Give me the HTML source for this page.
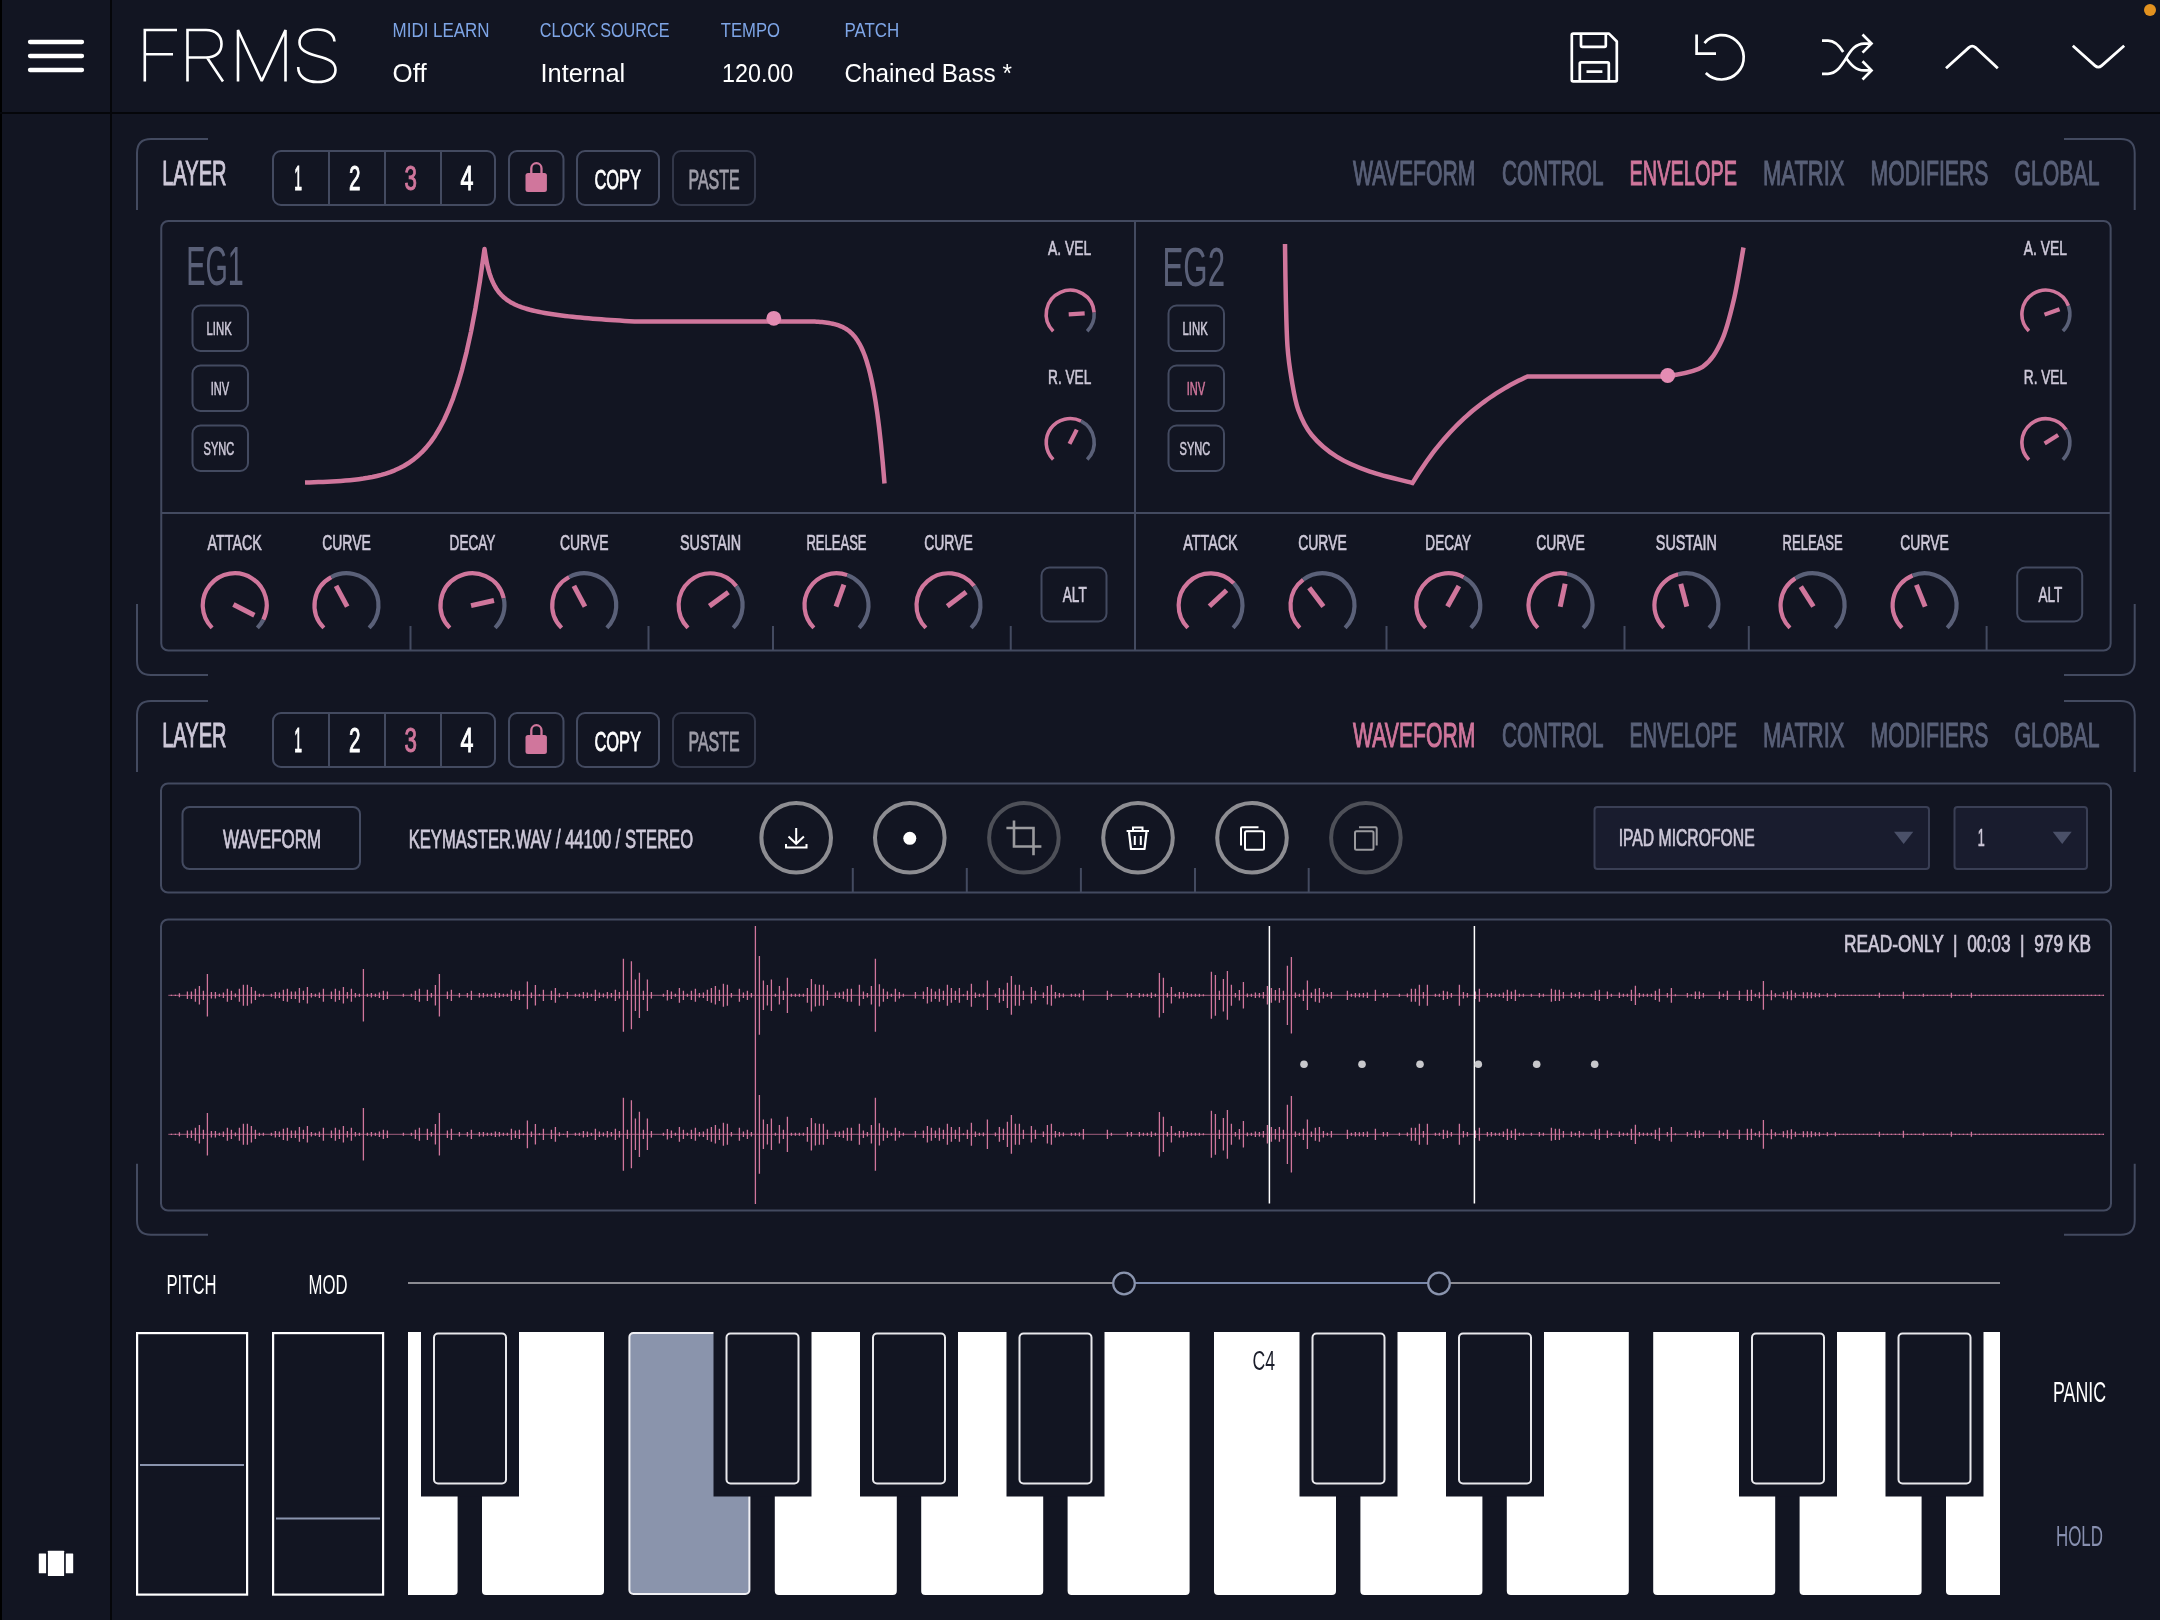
<!DOCTYPE html><html><head><meta charset="utf-8"><title>FRMS</title><style>html,body{margin:0;padding:0;background:#121522;width:2160px;height:1620px;overflow:hidden}svg{display:block;will-change:transform}text{font-family:"Liberation Sans",sans-serif}</style></head><body>
<svg width="2160" height="1620" viewBox="0 0 2160 1620">
<rect width="2160" height="1620" fill="#121522"/>
<rect x="0" y="0" width="2" height="1620" fill="#000"/>
<rect x="110" y="0" width="2" height="1620" fill="#05060a"/>
<rect x="0" y="112" width="2160" height="2" fill="#05060a"/>
<line x1="30" y1="42" x2="82" y2="42" stroke="#ffffff" stroke-width="4.3" stroke-linecap="round"/>
<line x1="30" y1="56" x2="82" y2="56" stroke="#ffffff" stroke-width="4.3" stroke-linecap="round"/>
<line x1="30" y1="70" x2="82" y2="70" stroke="#ffffff" stroke-width="4.3" stroke-linecap="round"/>
<path d="M144.8 81.5 V30 H177 M144.8 54.3 H173" fill="none" stroke="#ffffff" stroke-width="2.6"/>
<path d="M187.5 81.5 V30 H206 C216 30 221.5 36 221.5 44 C221.5 52 216 57.5 206 57.5 H187.5 M207 57.5 L223 81.5" fill="none" stroke="#ffffff" stroke-width="2.6"/>
<path d="M238 81.5 V30 L261.7 81 L285.5 30 V81.5" fill="none" stroke="#ffffff" stroke-width="2.6" stroke-linejoin="bevel"/>
<path d="M334.5 41.5 C334 33 326 29.5 317.5 29.5 C306 29.5 299.5 35 299.5 42.5 C299.5 50 306 53 317 56 C329 59 335.5 62 335.5 70 C335.5 77.5 328.5 82 317.5 82 C305.5 82 298.2 76 298.2 67" fill="none" stroke="#ffffff" stroke-width="2.6"/>
<text x="392.6" y="37.4" font-size="19.33" fill="#7ea5e6" text-anchor="start" font-weight="normal" textLength="97" lengthAdjust="spacingAndGlyphs">MIDI LEARN</text>
<text x="539.7" y="37.4" font-size="19.33" fill="#7ea5e6" text-anchor="start" font-weight="normal" textLength="129.9" lengthAdjust="spacingAndGlyphs">CLOCK SOURCE</text>
<text x="720.7" y="37.4" font-size="19.33" fill="#7ea5e6" text-anchor="start" font-weight="normal" textLength="59.3" lengthAdjust="spacingAndGlyphs">TEMPO</text>
<text x="844.4" y="37.4" font-size="19.33" fill="#7ea5e6" text-anchor="start" font-weight="normal" textLength="54.9" lengthAdjust="spacingAndGlyphs">PATCH</text>
<text x="392.6" y="81.9" font-size="26.6" fill="#ffffff" text-anchor="start" font-weight="normal" textLength="34.1" lengthAdjust="spacingAndGlyphs">Off</text>
<text x="540.5" y="81.9" font-size="26.6" fill="#ffffff" text-anchor="start" font-weight="normal" textLength="84.7" lengthAdjust="spacingAndGlyphs">Internal</text>
<text x="722" y="81.9" font-size="26.6" fill="#ffffff" text-anchor="start" font-weight="normal" textLength="71.3" lengthAdjust="spacingAndGlyphs">120.00</text>
<text x="844.4" y="81.9" font-size="26.6" fill="#ffffff" text-anchor="start" font-weight="normal" textLength="167.5" lengthAdjust="spacingAndGlyphs">Chained Bass *</text>
<path d="M1571.8 35 Q1571.8 33.6 1573.2 33.6 H1609 L1616.8 41.5 V80 Q1616.8 81.4 1615.4 81.4 H1573.2 Q1571.8 81.4 1571.8 80 Z" fill="none" stroke="#ffffff" stroke-width="2.7" stroke-linejoin="round"/>
<path d="M1581 33.6 V45.5 Q1581 46.8 1582.3 46.8 H1604.5 Q1605.8 46.8 1605.8 45.5 V33.6" fill="none" stroke="#ffffff" stroke-width="2.7"/>
<path d="M1579.8 81.4 V63.5 Q1579.8 62.3 1581 62.3 H1607.6 Q1608.8 62.3 1608.8 63.5 V81.4" fill="none" stroke="#ffffff" stroke-width="2.7"/>
<line x1="1586.5" y1="71.6" x2="1602.4" y2="71.6" stroke="#ffffff" stroke-width="2.7"/>
<path d="M1705.8 73 A22.2 22.2 0 1 0 1704.49 43.03" fill="none" stroke="#ffffff" stroke-width="2.7"/>
<path d="M1696.6 34.5 V53.6 H1716" fill="none" stroke="#ffffff" stroke-width="2.7"/>
<path d="M1822 40.6 H1828 C1834 40.6 1839 45 1843.2 52" fill="none" stroke="#ffffff" stroke-width="2.7"/>
<path d="M1822 73.8 H1828 C1836 73.8 1840.5 67 1846 58.5 C1851 50 1856 43.6 1864 43.6 H1871" fill="none" stroke="#ffffff" stroke-width="2.7"/>
<path d="M1845.6 57.2 C1851 65 1856 70.4 1864 70.4 H1871" fill="none" stroke="#ffffff" stroke-width="2.7"/>
<path d="M1862.5 34.5 L1871.5 43.6 L1862.5 52.6" fill="none" stroke="#ffffff" stroke-width="2.7"/>
<path d="M1862.5 61.3 L1871.5 70.4 L1862.5 79.5" fill="none" stroke="#ffffff" stroke-width="2.7"/>
<path d="M1946 68.3 L1968.8 47.6 Q1972.2 44.6 1975.6 47.6 L1997.8 68.3" fill="none" stroke="#ffffff" stroke-width="2.8"/>
<path d="M2072.8 45.8 L2094.9 65.6 Q2098.3 68.6 2101.7 65.6 L2124.2 45.8" fill="none" stroke="#ffffff" stroke-width="2.8"/>
<circle cx="2150" cy="10" r="6" fill="#e3921f" stroke="none" stroke-width="2"/>
<path d="M137 210 V153 Q137 139 151 139 H208" fill="none" stroke="#434a60" stroke-width="2"/>
<path d="M2064 139 H2120.7 Q2134.7 139 2134.7 153 V210" fill="none" stroke="#434a60" stroke-width="2"/>
<path d="M137 604 V661 Q137 675 151 675 H208" fill="none" stroke="#434a60" stroke-width="2"/>
<path d="M2064 675 H2120.7 Q2134.7 675 2134.7 661 V604" fill="none" stroke="#434a60" stroke-width="2"/>
<text x="162.22" y="185.38" font-size="34.4" fill="#cdc8d8" text-anchor="start" font-weight="normal" textLength="64.27" lengthAdjust="spacingAndGlyphs" stroke="#cdc8d8" stroke-width="1.03">LAYER</text>
<rect x="273" y="151" width="222" height="54" rx="8" fill="none" stroke="#434a60" stroke-width="2"/>
<line x1="329" y1="152" x2="329" y2="204" stroke="#434a60" stroke-width="2"/>
<line x1="385" y1="152" x2="385" y2="204" stroke="#434a60" stroke-width="2"/>
<line x1="441" y1="152" x2="441" y2="204" stroke="#434a60" stroke-width="2"/>
<text x="294.13" y="189.87" font-size="35.38" fill="#ffffff" text-anchor="start" font-weight="normal" textLength="7.74" lengthAdjust="spacingAndGlyphs" stroke="#ffffff" stroke-width="1.06">1</text>
<text x="349.03" y="189.87" font-size="35.38" fill="#ffffff" text-anchor="start" font-weight="normal" textLength="11.44" lengthAdjust="spacingAndGlyphs" stroke="#ffffff" stroke-width="1.06">2</text>
<text x="404.53" y="189.87" font-size="35.38" fill="#d0769c" text-anchor="start" font-weight="normal" textLength="12.44" lengthAdjust="spacingAndGlyphs" stroke="#d0769c" stroke-width="1.06">3</text>
<text x="460.53" y="189.87" font-size="35.38" fill="#ffffff" text-anchor="start" font-weight="normal" textLength="12.94" lengthAdjust="spacingAndGlyphs" stroke="#ffffff" stroke-width="1.06">4</text>
<rect x="509" y="151" width="54.5" height="54" rx="8" fill="none" stroke="#434a60" stroke-width="2"/>
<path d="M531.3 175 V168.3 A5.1 5.1 0 0 1 541.5 168.3 V175" fill="none" stroke="#d0769c" stroke-width="2.3"/>
<rect x="525.5" y="173" width="21.4" height="19" rx="2.5" fill="#d0769c" stroke="none" stroke-width="0"/>
<rect x="577" y="151" width="82" height="54" rx="8" fill="none" stroke="#434a60" stroke-width="2"/>
<text x="594.43" y="188.57" font-size="28.55" fill="#ffffff" text-anchor="start" font-weight="normal" textLength="46.64" lengthAdjust="spacingAndGlyphs" stroke="#ffffff" stroke-width="0.86">COPY</text>
<rect x="673" y="151" width="82" height="54" rx="8" fill="none" stroke="#323749" stroke-width="2"/>
<text x="688.43" y="188.57" font-size="28.55" fill="#9e9da8" text-anchor="start" font-weight="normal" textLength="51.14" lengthAdjust="spacingAndGlyphs" stroke="#9e9da8" stroke-width="0.86">PASTE</text>
<text x="1353.02" y="185.48" font-size="34.82" fill="#596078" text-anchor="start" font-weight="normal" textLength="122.46" lengthAdjust="spacingAndGlyphs" stroke="#596078" stroke-width="1.04">WAVEFORM</text>
<text x="1502.02" y="185.48" font-size="34.82" fill="#596078" text-anchor="start" font-weight="normal" textLength="101.46" lengthAdjust="spacingAndGlyphs" stroke="#596078" stroke-width="1.04">CONTROL</text>
<text x="1629.52" y="185.48" font-size="34.82" fill="#d0769c" text-anchor="start" font-weight="normal" textLength="107.46" lengthAdjust="spacingAndGlyphs" stroke="#d0769c" stroke-width="1.04">ENVELOPE</text>
<text x="1763.02" y="185.48" font-size="34.82" fill="#596078" text-anchor="start" font-weight="normal" textLength="81.46" lengthAdjust="spacingAndGlyphs" stroke="#596078" stroke-width="1.04">MATRIX</text>
<text x="1870.52" y="185.48" font-size="34.82" fill="#596078" text-anchor="start" font-weight="normal" textLength="117.96" lengthAdjust="spacingAndGlyphs" stroke="#596078" stroke-width="1.04">MODIFIERS</text>
<text x="2014.52" y="185.48" font-size="34.82" fill="#596078" text-anchor="start" font-weight="normal" textLength="84.96" lengthAdjust="spacingAndGlyphs" stroke="#596078" stroke-width="1.04">GLOBAL</text>
<rect x="161.25" y="221" width="1949.4" height="429.5" rx="7" fill="none" stroke="#434a60" stroke-width="2"/>
<line x1="162" y1="513" x2="2110" y2="513" stroke="#434a60" stroke-width="2"/>
<line x1="1135" y1="222" x2="1135" y2="650" stroke="#434a60" stroke-width="2"/>
<text x="186.25" y="284.5" font-size="56.32" fill="#5a6078" text-anchor="start" font-weight="normal" textLength="57.5" lengthAdjust="spacingAndGlyphs">EG1</text>
<rect x="192.5" y="305.5" width="55.5" height="45.5" rx="8" fill="none" stroke="#434a60" stroke-width="2"/>
<text x="206.52" y="335.23" font-size="18.11" fill="#cdc8d8" text-anchor="start" font-weight="normal" textLength="25.21" lengthAdjust="spacingAndGlyphs" stroke="#cdc8d8" stroke-width="0.54">LINK</text>
<rect x="192.5" y="365.5" width="55.5" height="45.5" rx="8" fill="none" stroke="#434a60" stroke-width="2"/>
<text x="210.77" y="395.23" font-size="18.11" fill="#cdc8d8" text-anchor="start" font-weight="normal" textLength="18.46" lengthAdjust="spacingAndGlyphs" stroke="#cdc8d8" stroke-width="0.54">INV</text>
<rect x="192.5" y="425.5" width="55.5" height="45.5" rx="8" fill="none" stroke="#434a60" stroke-width="2"/>
<text x="203.52" y="455.23" font-size="18.11" fill="#cdc8d8" text-anchor="start" font-weight="normal" textLength="30.71" lengthAdjust="spacingAndGlyphs" stroke="#cdc8d8" stroke-width="0.54">SYNC</text>
<rect x="1041.5" y="567.5" width="65" height="54" rx="8" fill="none" stroke="#434a60" stroke-width="2"/>
<text x="1062.83" y="601.67" font-size="21.94" fill="#cdc8d8" text-anchor="start" font-weight="normal" textLength="23.84" lengthAdjust="spacingAndGlyphs" stroke="#cdc8d8" stroke-width="0.66">ALT</text>
<text x="1048.11" y="255.29" font-size="20.33" fill="#cdc8d8" text-anchor="start" font-weight="normal" textLength="43.19" lengthAdjust="spacingAndGlyphs" stroke="#cdc8d8" stroke-width="0.61">A. VEL</text>
<text x="1048.11" y="383.69" font-size="20.33" fill="#cdc8d8" text-anchor="start" font-weight="normal" textLength="43.19" lengthAdjust="spacingAndGlyphs" stroke="#cdc8d8" stroke-width="0.61">R. VEL</text>
<line x1="410.5" y1="626" x2="410.5" y2="650" stroke="#434a60" stroke-width="2"/>
<line x1="648.5" y1="626" x2="648.5" y2="650" stroke="#434a60" stroke-width="2"/>
<line x1="773" y1="626" x2="773" y2="650" stroke="#434a60" stroke-width="2"/>
<line x1="1010.75" y1="626" x2="1010.75" y2="650" stroke="#434a60" stroke-width="2"/>
<text x="1162.5" y="285.5" font-size="56.32" fill="#5a6078" text-anchor="start" font-weight="normal" textLength="62.5" lengthAdjust="spacingAndGlyphs">EG2</text>
<rect x="1168.5" y="305.5" width="55.5" height="45.5" rx="8" fill="none" stroke="#434a60" stroke-width="2"/>
<text x="1182.52" y="335.23" font-size="18.11" fill="#cdc8d8" text-anchor="start" font-weight="normal" textLength="25.21" lengthAdjust="spacingAndGlyphs" stroke="#cdc8d8" stroke-width="0.54">LINK</text>
<rect x="1168.5" y="365.5" width="55.5" height="45.5" rx="8" fill="none" stroke="#434a60" stroke-width="2"/>
<text x="1186.77" y="395.23" font-size="18.11" fill="#d0769c" text-anchor="start" font-weight="normal" textLength="18.46" lengthAdjust="spacingAndGlyphs" stroke="#d0769c" stroke-width="0.54">INV</text>
<rect x="1168.5" y="425.5" width="55.5" height="45.5" rx="8" fill="none" stroke="#434a60" stroke-width="2"/>
<text x="1179.52" y="455.23" font-size="18.11" fill="#cdc8d8" text-anchor="start" font-weight="normal" textLength="30.71" lengthAdjust="spacingAndGlyphs" stroke="#cdc8d8" stroke-width="0.54">SYNC</text>
<rect x="2017.2" y="567.5" width="65" height="54" rx="8" fill="none" stroke="#434a60" stroke-width="2"/>
<text x="2038.53" y="601.67" font-size="21.94" fill="#cdc8d8" text-anchor="start" font-weight="normal" textLength="23.84" lengthAdjust="spacingAndGlyphs" stroke="#cdc8d8" stroke-width="0.66">ALT</text>
<text x="2023.81" y="255.29" font-size="20.33" fill="#cdc8d8" text-anchor="start" font-weight="normal" textLength="43.19" lengthAdjust="spacingAndGlyphs" stroke="#cdc8d8" stroke-width="0.61">A. VEL</text>
<text x="2023.81" y="383.69" font-size="20.33" fill="#cdc8d8" text-anchor="start" font-weight="normal" textLength="43.19" lengthAdjust="spacingAndGlyphs" stroke="#cdc8d8" stroke-width="0.61">R. VEL</text>
<line x1="1386.5" y1="626" x2="1386.5" y2="650" stroke="#434a60" stroke-width="2"/>
<line x1="1624.5" y1="626" x2="1624.5" y2="650" stroke="#434a60" stroke-width="2"/>
<line x1="1748.8" y1="626" x2="1748.8" y2="650" stroke="#434a60" stroke-width="2"/>
<line x1="1986.6" y1="626" x2="1986.6" y2="650" stroke="#434a60" stroke-width="2"/>
<text x="207.59" y="549.66" font-size="22.63" fill="#cdc8d8" text-anchor="start" font-weight="normal" textLength="54.32" lengthAdjust="spacingAndGlyphs" stroke="#cdc8d8" stroke-width="0.68">ATTACK</text>
<path d="M212.12 627.88 A32 32 0 1 1 263.28 619.73" fill="none" stroke="#d0769c" stroke-width="4.2"/>
<path d="M263.28 619.73 A32 32 0 0 1 257.38 627.88" fill="none" stroke="#5a6078" stroke-width="4.2"/>
<line x1="233.41" y1="604.57" x2="254.37" y2="615.21" stroke="#d0769c" stroke-width="5"/>
<text x="322.21" y="549.66" font-size="22.63" fill="#cdc8d8" text-anchor="start" font-weight="normal" textLength="48.57" lengthAdjust="spacingAndGlyphs" stroke="#cdc8d8" stroke-width="0.68">CURVE</text>
<path d="M323.87 627.88 A32 32 0 0 1 331.3 577.09" fill="none" stroke="#d0769c" stroke-width="4.2"/>
<path d="M331.3 577.09 A32 32 0 0 1 369.13 627.88" fill="none" stroke="#5a6078" stroke-width="4.2"/>
<line x1="347.21" y1="606.57" x2="336.05" y2="585.89" stroke="#d0769c" stroke-width="5"/>
<text x="449.59" y="549.66" font-size="22.63" fill="#cdc8d8" text-anchor="start" font-weight="normal" textLength="45.82" lengthAdjust="spacingAndGlyphs" stroke="#cdc8d8" stroke-width="0.68">DECAY</text>
<path d="M449.87 627.88 A32 32 0 1 1 503.74 598.32" fill="none" stroke="#d0769c" stroke-width="4.2"/>
<path d="M503.74 598.32 A32 32 0 0 1 495.13 627.88" fill="none" stroke="#5a6078" stroke-width="4.2"/>
<line x1="471.04" y1="605.57" x2="493.98" y2="600.48" stroke="#d0769c" stroke-width="5"/>
<text x="559.96" y="549.66" font-size="22.63" fill="#cdc8d8" text-anchor="start" font-weight="normal" textLength="48.57" lengthAdjust="spacingAndGlyphs" stroke="#cdc8d8" stroke-width="0.68">CURVE</text>
<path d="M561.62 627.88 A32 32 0 0 1 569.19 577.02" fill="none" stroke="#d0769c" stroke-width="4.2"/>
<path d="M569.19 577.02 A32 32 0 0 1 606.88 627.88" fill="none" stroke="#5a6078" stroke-width="4.2"/>
<line x1="584.96" y1="606.57" x2="573.89" y2="585.84" stroke="#d0769c" stroke-width="5"/>
<text x="680.06" y="549.66" font-size="22.63" fill="#cdc8d8" text-anchor="start" font-weight="normal" textLength="61.07" lengthAdjust="spacingAndGlyphs" stroke="#cdc8d8" stroke-width="0.68">SUSTAIN</text>
<path d="M687.97 627.88 A32 32 0 1 1 736.4 586.32" fill="none" stroke="#d0769c" stroke-width="4.2"/>
<path d="M736.4 586.32 A32 32 0 0 1 733.23 627.88" fill="none" stroke="#5a6078" stroke-width="4.2"/>
<line x1="709.39" y1="606.14" x2="728.34" y2="592.23" stroke="#d0769c" stroke-width="5"/>
<text x="806.46" y="549.66" font-size="22.63" fill="#cdc8d8" text-anchor="start" font-weight="normal" textLength="60.07" lengthAdjust="spacingAndGlyphs" stroke="#cdc8d8" stroke-width="0.68">RELEASE</text>
<path d="M813.87 627.88 A32 32 0 0 1 847.29 575.12" fill="none" stroke="#d0769c" stroke-width="4.2"/>
<path d="M847.29 575.12 A32 32 0 0 1 859.13 627.88" fill="none" stroke="#5a6078" stroke-width="4.2"/>
<line x1="835.99" y1="606.66" x2="843.92" y2="584.54" stroke="#d0769c" stroke-width="5"/>
<text x="924.21" y="549.66" font-size="22.63" fill="#cdc8d8" text-anchor="start" font-weight="normal" textLength="48.57" lengthAdjust="spacingAndGlyphs" stroke="#cdc8d8" stroke-width="0.68">CURVE</text>
<path d="M925.87 627.88 A32 32 0 1 1 974.12 586.08" fill="none" stroke="#d0769c" stroke-width="4.2"/>
<path d="M974.12 586.08 A32 32 0 0 1 971.13 627.88" fill="none" stroke="#5a6078" stroke-width="4.2"/>
<line x1="947.3" y1="606.15" x2="966.11" y2="592.07" stroke="#d0769c" stroke-width="5"/>
<text x="1183.34" y="549.66" font-size="22.63" fill="#cdc8d8" text-anchor="start" font-weight="normal" textLength="54.32" lengthAdjust="spacingAndGlyphs" stroke="#cdc8d8" stroke-width="0.68">ATTACK</text>
<path d="M1187.87 627.88 A32 32 0 1 1 1233.9 583.42" fill="none" stroke="#d0769c" stroke-width="4.2"/>
<path d="M1233.9 583.42 A32 32 0 0 1 1233.13 627.88" fill="none" stroke="#5a6078" stroke-width="4.2"/>
<line x1="1209.4" y1="606.27" x2="1226.58" y2="590.24" stroke="#d0769c" stroke-width="5"/>
<text x="1298.21" y="549.66" font-size="22.63" fill="#cdc8d8" text-anchor="start" font-weight="normal" textLength="48.57" lengthAdjust="spacingAndGlyphs" stroke="#cdc8d8" stroke-width="0.68">CURVE</text>
<path d="M1299.87 627.88 A32 32 0 0 1 1303.25 579.69" fill="none" stroke="#d0769c" stroke-width="4.2"/>
<path d="M1303.25 579.69 A32 32 0 0 1 1345.13 627.88" fill="none" stroke="#5a6078" stroke-width="4.2"/>
<line x1="1323.4" y1="606.45" x2="1309.26" y2="587.68" stroke="#d0769c" stroke-width="5"/>
<text x="1425.34" y="549.66" font-size="22.63" fill="#cdc8d8" text-anchor="start" font-weight="normal" textLength="45.82" lengthAdjust="spacingAndGlyphs" stroke="#cdc8d8" stroke-width="0.68">DECAY</text>
<path d="M1425.62 627.88 A32 32 0 0 1 1463.71 577.23" fill="none" stroke="#d0769c" stroke-width="4.2"/>
<path d="M1463.71 577.23 A32 32 0 0 1 1470.88 627.88" fill="none" stroke="#5a6078" stroke-width="4.2"/>
<line x1="1447.53" y1="606.56" x2="1458.88" y2="585.99" stroke="#d0769c" stroke-width="5"/>
<text x="1536.21" y="549.66" font-size="22.63" fill="#cdc8d8" text-anchor="start" font-weight="normal" textLength="48.57" lengthAdjust="spacingAndGlyphs" stroke="#cdc8d8" stroke-width="0.68">CURVE</text>
<path d="M1537.87 627.88 A32 32 0 0 1 1567.24 573.97" fill="none" stroke="#d0769c" stroke-width="4.2"/>
<path d="M1567.24 573.97 A32 32 0 0 1 1583.13 627.88" fill="none" stroke="#5a6078" stroke-width="4.2"/>
<line x1="1560.18" y1="606.72" x2="1565.13" y2="583.74" stroke="#d0769c" stroke-width="5"/>
<text x="1655.86" y="549.66" font-size="22.63" fill="#cdc8d8" text-anchor="start" font-weight="normal" textLength="61.07" lengthAdjust="spacingAndGlyphs" stroke="#cdc8d8" stroke-width="0.68">SUSTAIN</text>
<path d="M1663.77 627.88 A32 32 0 0 1 1678.2 574.32" fill="none" stroke="#d0769c" stroke-width="4.2"/>
<path d="M1678.2 574.32 A32 32 0 0 1 1709.03 627.88" fill="none" stroke="#5a6078" stroke-width="4.2"/>
<line x1="1686.78" y1="606.7" x2="1680.76" y2="583.98" stroke="#d0769c" stroke-width="5"/>
<text x="1782.56" y="549.66" font-size="22.63" fill="#cdc8d8" text-anchor="start" font-weight="normal" textLength="60.07" lengthAdjust="spacingAndGlyphs" stroke="#cdc8d8" stroke-width="0.68">RELEASE</text>
<path d="M1789.97 627.88 A32 32 0 0 1 1795.45 578.23" fill="none" stroke="#d0769c" stroke-width="4.2"/>
<path d="M1795.45 578.23 A32 32 0 0 1 1835.23 627.88" fill="none" stroke="#5a6078" stroke-width="4.2"/>
<line x1="1813.4" y1="606.52" x2="1800.81" y2="586.67" stroke="#d0769c" stroke-width="5"/>
<text x="1900.31" y="549.66" font-size="22.63" fill="#cdc8d8" text-anchor="start" font-weight="normal" textLength="48.57" lengthAdjust="spacingAndGlyphs" stroke="#cdc8d8" stroke-width="0.68">CURVE</text>
<path d="M1901.97 627.88 A32 32 0 0 1 1912.68 575.55" fill="none" stroke="#d0769c" stroke-width="4.2"/>
<path d="M1912.68 575.55 A32 32 0 0 1 1947.23 627.88" fill="none" stroke="#5a6078" stroke-width="4.2"/>
<line x1="1925.16" y1="606.64" x2="1916.4" y2="584.83" stroke="#d0769c" stroke-width="5"/>
<path d="M1053.23 331.17 A24 24 0 1 1 1094.15 312.69" fill="none" stroke="#d0769c" stroke-width="3.6"/>
<path d="M1094.15 312.69 A24 24 0 0 1 1087.17 331.17" fill="none" stroke="#5a6078" stroke-width="3.6"/>
<line x1="1068.7" y1="314.29" x2="1084.67" y2="313.29" stroke="#d0769c" stroke-width="4.2"/>
<path d="M1053.23 459.47 A24 24 0 0 1 1081.1 421.12" fill="none" stroke="#d0769c" stroke-width="3.6"/>
<path d="M1081.1 421.12 A24 24 0 0 1 1087.17 459.47" fill="none" stroke="#5a6078" stroke-width="3.6"/>
<line x1="1069.52" y1="443.84" x2="1076.78" y2="429.58" stroke="#d0769c" stroke-width="4.2"/>
<path d="M2028.93 331.07 A24 24 0 1 1 2068.48 305.97" fill="none" stroke="#d0769c" stroke-width="3.6"/>
<path d="M2068.48 305.97 A24 24 0 0 1 2062.87 331.07" fill="none" stroke="#5a6078" stroke-width="3.6"/>
<line x1="2044.49" y1="314.61" x2="2059.54" y2="309.19" stroke="#d0769c" stroke-width="4.2"/>
<path d="M2028.93 459.67 A24 24 0 1 1 2066.14 429.81" fill="none" stroke="#d0769c" stroke-width="3.6"/>
<path d="M2066.14 429.81 A24 24 0 0 1 2062.87 459.67" fill="none" stroke="#5a6078" stroke-width="3.6"/>
<line x1="2044.63" y1="443.51" x2="2058.13" y2="434.91" stroke="#d0769c" stroke-width="4.2"/>
<path d="M305 482.5 L309.49 482.39 L313.98 482.26 L318.46 482.11 L322.95 481.94 L327.44 481.75 L331.93 481.52 L336.41 481.25 L340.9 480.95 L345.39 480.59 L349.88 480.19 L354.36 479.71 L358.85 479.17 L363.34 478.54 L367.82 477.81 L372.31 476.97 L376.8 475.99 L381.29 474.87 L385.77 473.57 L390.26 472.06 L394.75 470.32 L399.24 468.31 L403.73 465.99 L408.21 463.3 L412.7 460.19 L417.19 456.6 L421.68 452.45 L426.16 447.65 L430.65 442.1 L435.14 435.69 L439.62 428.27 L444.11 419.7 L448.6 409.79 L453.09 398.33 L457.57 385.09 L462.06 369.78 L466.55 352.08 L471.04 331.61 L475.52 307.96 L480.01 280.61 L484.5 249 L484.54 249.3 L484.67 250.19 L484.88 251.63 L485.17 253.55 L485.54 255.87 L486 258.5 L486.54 261.35 L487.17 264.34 L487.88 267.4 L488.67 270.45 L489.54 273.45 L490.5 276.37 L491.54 279.17 L492.67 281.84 L493.88 284.36 L495.17 286.74 L496.54 288.97 L498 291.06 L499.54 293 L501.17 294.82 L502.88 296.5 L504.67 298.08 L506.54 299.54 L508.5 300.9 L510.54 302.17 L512.67 303.36 L514.88 304.46 L517.17 305.49 L519.54 306.46 L522 307.37 L524.54 308.22 L527.17 309.02 L529.88 309.78 L532.67 310.49 L535.54 311.16 L538.5 311.8 L541.54 312.41 L544.67 312.98 L547.88 313.53 L551.17 314.06 L554.54 314.56 L558 315.04 L561.54 315.5 L565.17 315.94 L568.88 316.37 L572.67 316.78 L576.54 317.18 L580.5 317.56 L584.54 317.93 L588.67 318.3 L592.88 318.65 L597.17 318.99 L601.54 319.33 L606 319.66 L610.54 319.98 L615.17 320.29 L619.88 320.6 L624.67 320.91 L629.54 321.21 L634.5 321.5 L813 321.5 L814.79 321.59 L816.58 321.69 L818.36 321.81 L820.15 321.95 L821.94 322.11 L823.73 322.29 L825.51 322.5 L827.3 322.74 L829.09 323.02 L830.88 323.34 L832.66 323.7 L834.45 324.12 L836.24 324.61 L838.02 325.17 L839.81 325.81 L841.6 326.55 L843.39 327.4 L845.17 328.37 L846.96 329.49 L848.75 330.79 L850.54 332.27 L852.33 333.98 L854.11 335.95 L855.9 338.21 L857.69 340.81 L859.48 343.8 L861.26 347.24 L863.05 351.2 L864.84 355.76 L866.62 361 L868.41 367.02 L870.2 373.95 L871.99 381.92 L873.77 391.1 L875.56 401.64 L877.35 413.78 L879.14 427.74 L880.92 443.79 L882.71 462.26 L884.5 483.5" fill="none" stroke="#d0769c" stroke-width="4.5" stroke-linejoin="round"/>
<circle cx="773.8" cy="318.3" r="7.4" fill="#e48cb3" stroke="none" stroke-width="2"/>
<path d="M1285 244 C1285.13 252.78 1285.38 279.58 1285.8 296.7 C1286.22 313.82 1286.52 332.82 1287.5 346.7 C1288.48 360.58 1289.9 369.45 1291.7 380 C1293.5 390.55 1294.97 400.83 1298.3 410 C1301.63 419.17 1305.3 427.22 1311.7 435 C1318.1 442.78 1326.98 450.58 1336.7 456.7 C1346.42 462.82 1357.37 467.32 1370 471.7 C1382.63 476.08 1405.42 481.12 1412.5 483 L1415.38 478.32 L1418.25 473.79 L1421.12 469.4 L1424 465.15 L1426.88 461.04 L1429.75 457.06 L1432.62 453.21 L1435.5 449.48 L1438.38 445.87 L1441.25 442.38 L1444.12 439 L1447 435.72 L1449.88 432.55 L1452.75 429.48 L1455.62 426.51 L1458.5 423.64 L1461.38 420.86 L1464.25 418.16 L1467.12 415.55 L1470 413.03 L1472.88 410.58 L1475.75 408.22 L1478.62 405.93 L1481.5 403.71 L1484.38 401.57 L1487.25 399.49 L1490.12 397.48 L1493 395.53 L1495.88 393.65 L1498.75 391.82 L1501.62 390.06 L1504.5 388.35 L1507.38 386.69 L1510.25 385.09 L1513.12 383.54 L1516 382.04 L1518.88 380.59 L1521.75 379.18 L1524.62 377.82 L1527.5 376.5 L1667.7 376.5 L1667.7 376.5 C1673.52 374.88 1693.58 372.82 1702.6 366.8 C1711.62 360.78 1716.58 351.63 1721.8 340.4 C1727.02 329.17 1730.28 314.88 1733.9 299.4 C1737.52 283.92 1741.9 256.15 1743.5 247.5" fill="none" stroke="#d0769c" stroke-width="4.5"/>
<circle cx="1667.7" cy="375.5" r="7.4" fill="#e48cb3" stroke="none" stroke-width="2"/>
<path d="M137 772 V715 Q137 701 151 701 H208" fill="none" stroke="#434a60" stroke-width="2"/>
<path d="M2064 701 H2120.7 Q2134.7 701 2134.7 715 V772" fill="none" stroke="#434a60" stroke-width="2"/>
<path d="M137 1163.7 V1220.7 Q137 1234.7 151 1234.7 H208" fill="none" stroke="#434a60" stroke-width="2"/>
<path d="M2064 1234.7 H2120.7 Q2134.7 1234.7 2134.7 1220.7 V1163.7" fill="none" stroke="#434a60" stroke-width="2"/>
<text x="162.22" y="747.38" font-size="34.4" fill="#cdc8d8" text-anchor="start" font-weight="normal" textLength="64.27" lengthAdjust="spacingAndGlyphs" stroke="#cdc8d8" stroke-width="1.03">LAYER</text>
<rect x="273" y="713" width="222" height="54" rx="8" fill="none" stroke="#434a60" stroke-width="2"/>
<line x1="329" y1="714" x2="329" y2="766" stroke="#434a60" stroke-width="2"/>
<line x1="385" y1="714" x2="385" y2="766" stroke="#434a60" stroke-width="2"/>
<line x1="441" y1="714" x2="441" y2="766" stroke="#434a60" stroke-width="2"/>
<text x="294.13" y="751.87" font-size="35.38" fill="#ffffff" text-anchor="start" font-weight="normal" textLength="7.74" lengthAdjust="spacingAndGlyphs" stroke="#ffffff" stroke-width="1.06">1</text>
<text x="349.03" y="751.87" font-size="35.38" fill="#ffffff" text-anchor="start" font-weight="normal" textLength="11.44" lengthAdjust="spacingAndGlyphs" stroke="#ffffff" stroke-width="1.06">2</text>
<text x="404.53" y="751.87" font-size="35.38" fill="#d0769c" text-anchor="start" font-weight="normal" textLength="12.44" lengthAdjust="spacingAndGlyphs" stroke="#d0769c" stroke-width="1.06">3</text>
<text x="460.53" y="751.87" font-size="35.38" fill="#ffffff" text-anchor="start" font-weight="normal" textLength="12.94" lengthAdjust="spacingAndGlyphs" stroke="#ffffff" stroke-width="1.06">4</text>
<rect x="509" y="713" width="54.5" height="54" rx="8" fill="none" stroke="#434a60" stroke-width="2"/>
<path d="M531.3 737 V730.3 A5.1 5.1 0 0 1 541.5 730.3 V737" fill="none" stroke="#d0769c" stroke-width="2.3"/>
<rect x="525.5" y="735" width="21.4" height="19" rx="2.5" fill="#d0769c" stroke="none" stroke-width="0"/>
<rect x="577" y="713" width="82" height="54" rx="8" fill="none" stroke="#434a60" stroke-width="2"/>
<text x="594.43" y="750.57" font-size="28.55" fill="#ffffff" text-anchor="start" font-weight="normal" textLength="46.64" lengthAdjust="spacingAndGlyphs" stroke="#ffffff" stroke-width="0.86">COPY</text>
<rect x="673" y="713" width="82" height="54" rx="8" fill="none" stroke="#323749" stroke-width="2"/>
<text x="688.43" y="750.57" font-size="28.55" fill="#9e9da8" text-anchor="start" font-weight="normal" textLength="51.14" lengthAdjust="spacingAndGlyphs" stroke="#9e9da8" stroke-width="0.86">PASTE</text>
<text x="1353.02" y="747.48" font-size="34.82" fill="#d0769c" text-anchor="start" font-weight="normal" textLength="122.46" lengthAdjust="spacingAndGlyphs" stroke="#d0769c" stroke-width="1.04">WAVEFORM</text>
<text x="1502.02" y="747.48" font-size="34.82" fill="#596078" text-anchor="start" font-weight="normal" textLength="101.46" lengthAdjust="spacingAndGlyphs" stroke="#596078" stroke-width="1.04">CONTROL</text>
<text x="1629.52" y="747.48" font-size="34.82" fill="#596078" text-anchor="start" font-weight="normal" textLength="107.46" lengthAdjust="spacingAndGlyphs" stroke="#596078" stroke-width="1.04">ENVELOPE</text>
<text x="1763.02" y="747.48" font-size="34.82" fill="#596078" text-anchor="start" font-weight="normal" textLength="81.46" lengthAdjust="spacingAndGlyphs" stroke="#596078" stroke-width="1.04">MATRIX</text>
<text x="1870.52" y="747.48" font-size="34.82" fill="#596078" text-anchor="start" font-weight="normal" textLength="117.96" lengthAdjust="spacingAndGlyphs" stroke="#596078" stroke-width="1.04">MODIFIERS</text>
<text x="2014.52" y="747.48" font-size="34.82" fill="#596078" text-anchor="start" font-weight="normal" textLength="84.96" lengthAdjust="spacingAndGlyphs" stroke="#596078" stroke-width="1.04">GLOBAL</text>
<rect x="161" y="783.5" width="1950" height="109" rx="7" fill="none" stroke="#434a60" stroke-width="2"/>
<rect x="182.5" y="807" width="177.5" height="62" rx="7" fill="none" stroke="#434a60" stroke-width="2"/>
<text x="223.09" y="848.01" font-size="25.91" fill="#cdc8d8" text-anchor="start" font-weight="normal" textLength="97.92" lengthAdjust="spacingAndGlyphs" stroke="#cdc8d8" stroke-width="0.78">WAVEFORM</text>
<text x="408.79" y="848.01" font-size="25.91" fill="#cdc8d8" text-anchor="start" font-weight="normal" textLength="284.22" lengthAdjust="spacingAndGlyphs" stroke="#cdc8d8" stroke-width="0.78">KEYMASTER.WAV / 44100 / STEREO</text>
<circle cx="796.2" cy="837.8" r="34.8" fill="none" stroke="#8d8d92" stroke-width="4"/>
<circle cx="909.8" cy="837.8" r="34.8" fill="none" stroke="#8d8d92" stroke-width="4"/>
<circle cx="1023.9" cy="837.8" r="34.8" fill="none" stroke="#4e5058" stroke-width="4"/>
<circle cx="1138" cy="837.8" r="34.8" fill="none" stroke="#8d8d92" stroke-width="4"/>
<circle cx="1252" cy="837.8" r="34.8" fill="none" stroke="#8d8d92" stroke-width="4"/>
<circle cx="1365.9" cy="837.8" r="34.8" fill="none" stroke="#4e5058" stroke-width="4"/>
<line x1="852.8" y1="868" x2="852.8" y2="892" stroke="#434a60" stroke-width="2"/>
<line x1="966.8" y1="868" x2="966.8" y2="892" stroke="#434a60" stroke-width="2"/>
<line x1="1080.9" y1="868" x2="1080.9" y2="892" stroke="#434a60" stroke-width="2"/>
<line x1="1195" y1="868" x2="1195" y2="892" stroke="#434a60" stroke-width="2"/>
<line x1="1308.7" y1="868" x2="1308.7" y2="892" stroke="#434a60" stroke-width="2"/>
<path d="M796.2 828 V843.5 M788.5 836.5 L796.2 843.8 L803.9 836.5" fill="none" stroke="#ffffff" stroke-width="2"/>
<path d="M786 844 V847.5 H806.5 V844" fill="none" stroke="#ffffff" stroke-width="2"/>
<circle cx="909.8" cy="838.3" r="6.5" fill="#ffffff" stroke="none" stroke-width="2"/>
<path d="M1014 820.5 V846.5 H1041.4 M1006.4 828 H1033.5 V855.2" fill="none" stroke="#9a9a9e" stroke-width="2.6"/>
<path d="M1129 832 L1131 849 H1144.5 L1146.5 832" fill="none" stroke="#ffffff" stroke-width="2.2" stroke-linejoin="round"/>
<path d="M1126.6 831 H1149 M1133 831 V827.5 H1142.5 V831 M1134.8 836 V845 M1140.8 836 V845" fill="none" stroke="#ffffff" stroke-width="2"/>
<rect x="1245" y="831.2" width="19" height="18.5" rx="1.5" fill="none" stroke="#ffffff" stroke-width="2"/>
<path d="M1241 845.5 V828.5 Q1241 827.3 1242.2 827.3 H1258.5" fill="none" stroke="#ffffff" stroke-width="2"/>
<rect x="1355" y="831.2" width="18.5" height="18.5" rx="1.5" fill="none" stroke="#9a9a9e" stroke-width="2"/>
<path d="M1359 827.3 H1375.5 Q1376.7 827.3 1376.7 828.5 V845.5" fill="none" stroke="#9a9a9e" stroke-width="2"/>
<rect x="1594.5" y="807" width="334.5" height="62" rx="3" fill="#191c2e" stroke="#3a3f55" stroke-width="2"/>
<text x="1618.66" y="846.34" font-size="24.23" fill="#cdc8d8" text-anchor="start" font-weight="normal" textLength="135.97" lengthAdjust="spacingAndGlyphs" stroke="#cdc8d8" stroke-width="0.73">IPAD MICROFONE</text>
<path d="M1894 831.7 H1913.3 L1903.65 844 Z" fill="#4a5068" stroke="none" stroke-width="2"/>
<rect x="1954.5" y="807" width="132.5" height="62" rx="3" fill="#191c2e" stroke="#3a3f55" stroke-width="2"/>
<text x="1977.66" y="846.34" font-size="24.23" fill="#cdc8d8" text-anchor="start" font-weight="normal" textLength="6.97" lengthAdjust="spacingAndGlyphs" stroke="#cdc8d8" stroke-width="0.73">1</text>
<path d="M2052.7 831.7 H2071.7 L2062.2 844 Z" fill="#4a5068" stroke="none" stroke-width="2"/>
<rect x="161" y="919.5" width="1950" height="291" rx="7" fill="none" stroke="#434a60" stroke-width="2"/>
<path d="M171.4 994.7 V995.9 M175.4 994.7 V995.9 M179.4 993.3 V997.3 M187.4 991.6 V999 M191.4 991.6 V999 M195.4 988.8 V1001.8 M199.4 986 V1004.6 M203.4 990.7 V999.9 M207.4 974 V1016.6 M211.4 992 V998.6 M215.4 992 V998.6 M219.4 993.8 V996.8 M223.4 992.5 V998.1 M227.4 988.8 V1001.8 M231.4 990.7 V999.9 M235.4 993.4 V997.2 M239.4 988.8 V1001.8 M243.4 984.8 V1005.8 M247.4 984.8 V1005.8 M251.4 987 V1003.6 M255.4 990.7 V999.9 M259.4 993.8 V996.8 M263.4 993.8 V996.8 M271.4 993.8 V996.8 M275.4 992 V998.6 M279.4 992.5 V998.1 M283.4 989.7 V1000.9 M287.4 988.8 V1001.8 M291.4 991.6 V999 M295.4 991.6 V999 M299.4 987.9 V1002.7 M303.4 990.7 V999.9 M307.4 987 V1003.6 M311.4 993.1 V997.5 M315.4 993.8 V996.8 M319.4 992.5 V998.1 M323.4 988.8 V1001.8 M331.4 991.6 V999 M335.4 988.8 V1001.8 M339.4 990.7 V999.9 M343.4 987 V1003.6 M347.4 992 V998.6 M351.4 988.8 V1001.8 M355.4 993.1 V997.5 M359.4 993.8 V996.8 M363.4 969 V1021.6 M367.4 993.8 V996.8 M371.4 993.1 V997.5 M375.4 993.8 V996.8 M379.4 992.5 V998.1 M383.4 990.7 V999.9 M387.4 991.6 V999 M403.4 993.8 V996.8 M411.4 993.8 V996.8 M415.4 990.7 V999.9 M419.4 988.8 V1001.8 M427.4 989.7 V1000.9 M431.4 993.1 V997.5 M435.4 985.1 V1005.5 M439.4 974 V1016.6 M447.4 991.6 V999 M451.4 989.7 V1000.9 M459.4 993.1 V997.5 M467.4 993.1 V997.5 M471.4 990.7 V999.9 M479.4 993.1 V997.5 M483.4 993.1 V997.5 M487.4 993.8 V996.8 M491.4 993.8 V996.8 M495.4 992.5 V998.1 M499.4 993.1 V997.5 M503.4 993.8 V996.8 M507.4 993.8 V996.8 M511.4 989.7 V1000.9 M515.4 991.6 V999 M519.4 990.7 V999.9 M523.4 994.3 V996.3 M527.4 981.4 V1009.2 M531.4 992.5 V998.1 M535.4 985.1 V1005.5 M539.4 994.3 V996.3 M543.4 989.7 V1000.9 M551.4 990.7 V999.9 M555.4 987.9 V1002.7 M559.4 993.3 V997.3 M563.4 994.7 V995.9 M567.4 992 V998.6 M575.4 993.8 V996.8 M579.4 993.8 V996.8 M583.4 992 V998.6 M587.4 992.5 V998.1 M591.4 993.8 V996.8 M595.4 989.7 V1000.9 M599.4 992.5 V998.1 M603.4 993.4 V997.2 M607.4 992 V998.6 M611.4 993.1 V997.5 M615.4 989.7 V1000.9 M619.4 992 V998.6 M623.4 958.8 V1031.8 M627.4 990.7 V999.9 M631.4 961.3 V1029.3 M635.4 979.6 V1011 M639.4 972.7 V1017.9 M643.4 990.7 V999.9 M647.4 979.6 V1011 M651.4 992 V998.6 M663.4 993.8 V996.8 M667.4 990.1 V1000.5 M671.4 991.6 V999 M675.4 993.8 V996.8 M679.4 987.9 V1002.7 M683.4 990.7 V999.9 M687.4 993.8 V996.8 M691.4 990.7 V999.9 M695.4 988.8 V1001.8 M699.4 993.1 V997.5 M703.4 992.5 V998.1 M707.4 989.7 V1000.9 M711.4 987.9 V1002.7 M715.4 986 V1004.6 M719.4 989.7 V1000.9 M723.4 983.8 V1006.8 M727.4 984.8 V1005.8 M731.4 993.1 V997.5 M739.4 988.8 V1001.8 M743.4 992.5 V998.1 M747.4 990.7 V999.9 M751.4 993.1 V997.5 M759.4 955.9 V1034.7 M763.4 980.5 V1010.1 M767.4 985.1 V1005.5 M771.4 979.6 V1011 M775.4 993.8 V996.8 M779.4 986 V1004.6 M783.4 990.7 V999.9 M787.4 977.7 V1012.9 M791.4 993.8 V996.8 M795.4 993.8 V996.8 M799.4 993.8 V996.8 M803.4 993.8 V996.8 M807.4 987.9 V1002.7 M811.4 979 V1011.6 M815.4 984.2 V1006.4 M819.4 984.8 V1005.8 M823.4 984.8 V1005.8 M827.4 990.7 V999.9 M835.4 992.5 V998.1 M839.4 992.5 V998.1 M843.4 991.6 V999 M847.4 988.8 V1001.8 M851.4 988.8 V1001.8 M859.4 984.8 V1005.8 M863.4 991.6 V999 M867.4 993.1 V997.5 M871.4 986 V1004.6 M875.4 958.8 V1031.8 M879.4 984.2 V1006.4 M883.4 988.8 V1001.8 M887.4 991.6 V999 M891.4 993.8 V996.8 M895.4 988.8 V1001.8 M899.4 992 V998.6 M903.4 993.8 V996.8 M915.4 992 V998.6 M923.4 991.6 V999 M927.4 987 V1003.6 M931.4 988.8 V1001.8 M935.4 991.6 V999 M939.4 988.8 V1001.8 M943.4 990.7 V999.9 M947.4 984.8 V1005.8 M951.4 987.9 V1002.7 M955.4 990.7 V999.9 M959.4 987.9 V1002.7 M963.4 994.3 V996.3 M967.4 990.7 V999.9 M971.4 983.8 V1006.8 M975.4 992.5 V998.1 M979.4 993.8 V996.8 M983.4 993.4 V997.2 M987.4 980.5 V1010.1 M995.4 993.4 V997.2 M999.4 987.9 V1002.7 M1003.4 989.7 V1000.9 M1007.4 982.7 V1007.9 M1011.4 975.9 V1014.7 M1015.4 984.8 V1005.8 M1019.4 984.8 V1005.8 M1023.4 990.7 V999.9 M1031.4 987 V1003.6 M1035.4 990.7 V999.9 M1043.4 992.5 V998.1 M1047.4 986 V1004.6 M1051.4 984.8 V1005.8 M1055.4 992 V998.6 M1059.4 993.1 V997.5 M1063.4 993.4 V997.2 M1071.4 993.8 V996.8 M1075.4 993.8 V996.8 M1079.4 993.4 V997.2 M1083.4 990.1 V1000.5 M1107.4 990.7 V999.9 M1111.4 993.8 V996.8 M1127.4 993.1 V997.5 M1131.4 993.1 V997.5 M1139.4 993.1 V997.5 M1143.4 993.8 V996.8 M1147.4 993.8 V996.8 M1151.4 992.5 V998.1 M1155.4 993.8 V996.8 M1159.4 973.1 V1017.5 M1163.4 977.7 V1012.9 M1167.4 993.1 V997.5 M1171.4 987 V1003.6 M1175.4 993.8 V996.8 M1179.4 992 V998.6 M1183.4 992 V998.6 M1187.4 993.1 V997.5 M1191.4 993.8 V996.8 M1195.4 993.8 V996.8 M1199.4 993.8 V996.8 M1203.4 994.3 V996.3 M1211.4 971.8 V1018.8 M1215.4 974.9 V1015.7 M1219.4 990.7 V999.9 M1223.4 979 V1011.6 M1227.4 970.9 V1019.7 M1231.4 984.8 V1005.8 M1235.4 993.1 V997.5 M1239.4 990.1 V1000.5 M1243.4 982 V1008.6 M1247.4 993.4 V997.2 M1251.4 993.8 V996.8 M1255.4 992.5 V998.1 M1259.4 993.1 V997.5 M1263.4 992 V998.6 M1267.4 986 V1004.6 M1271.4 987.9 V1002.7 M1275.4 990.1 V1000.5 M1279.4 987.9 V1002.7 M1283.4 990.7 V999.9 M1287.4 965.7 V1024.9 M1291.4 957 V1033.6 M1295.4 992.5 V998.1 M1299.4 993.8 V996.8 M1303.4 989.7 V1000.9 M1307.4 980.5 V1010.1 M1311.4 992.5 V998.1 M1315.4 988.8 V1001.8 M1319.4 987.9 V1002.7 M1323.4 992 V998.6 M1327.4 993.8 V996.8 M1331.4 992 V998.6 M1347.4 990.7 V999.9 M1351.4 993.8 V996.8 M1355.4 993.1 V997.5 M1359.4 993.3 V997.3 M1363.4 993.1 V997.5 M1367.4 992.5 V998.1 M1375.4 989.7 V1000.9 M1383.4 993.1 V997.5 M1387.4 993.1 V997.5 M1399.4 993.8 V996.8 M1407.4 993.4 V997.2 M1411.4 988.8 V1001.8 M1415.4 988.8 V1001.8 M1419.4 984.8 V1005.8 M1423.4 992 V998.6 M1427.4 984.8 V1005.8 M1435.4 993.8 V996.8 M1439.4 993.8 V996.8 M1443.4 990.7 V999.9 M1447.4 991.6 V999 M1451.4 993.1 V997.5 M1459.4 984.8 V1005.8 M1463.4 992 V998.6 M1467.4 993.1 V997.5 M1475.4 991.6 V999 M1479.4 988.8 V1001.8 M1487.4 993.1 V997.5 M1491.4 993.1 V997.5 M1495.4 993.8 V996.8 M1499.4 993.8 V996.8 M1503.4 992.5 V998.1 M1507.4 989.7 V1000.9 M1511.4 991.6 V999 M1515.4 989.7 V1000.9 M1519.4 993.8 V996.8 M1523.4 993.8 V996.8 M1531.4 993.8 V996.8 M1539.4 993.1 V997.5 M1543.4 993.8 V996.8 M1551.4 988.8 V1001.8 M1555.4 989.7 V1000.9 M1559.4 989.7 V1000.9 M1563.4 992 V998.6 M1571.4 992.5 V998.1 M1575.4 993.8 V996.8 M1579.4 992 V998.6 M1583.4 993.8 V996.8 M1591.4 993.8 V996.8 M1595.4 990.7 V999.9 M1599.4 989.7 V1000.9 M1607.4 991.6 V999 M1611.4 993.8 V996.8 M1619.4 992.5 V998.1 M1623.4 993.8 V996.8 M1627.4 993.8 V996.8 M1631.4 989.7 V1000.9 M1635.4 985.7 V1004.9 M1639.4 993.1 V997.5 M1643.4 993.8 V996.8 M1647.4 993.8 V996.8 M1651.4 993.8 V996.8 M1655.4 990.7 V999.9 M1659.4 988.8 V1001.8 M1667.4 993.1 V997.5 M1671.4 987.9 V1002.7 M1675.4 994.3 V996.3 M1687.4 993.1 V997.5 M1691.4 994.3 V996.3 M1695.4 991.6 V999 M1699.4 991.6 V999 M1703.4 993.1 V997.5 M1719.4 991.6 V999 M1723.4 993.8 V996.8 M1727.4 990.7 V999.9 M1739.4 990.7 V999.9 M1747.4 989.7 V1000.9 M1751.4 989.7 V1000.9 M1755.4 993.8 V996.8 M1759.4 992.3 V998.3 M1763.4 980.9 V1009.7 M1767.4 994.3 V996.3 M1771.4 990.3 V1000.3 M1775.4 993.3 V997.3 M1779.4 994.8 V995.8 M1783.4 992.3 V998.3 M1787.4 991.3 V999.3 M1791.4 990.3 V1000.3 M1795.4 992.8 V997.8 M1799.4 994.8 V995.8 M1803.4 992.3 V998.3 M1807.4 992.3 V998.3 M1811.4 992.3 V998.3 M1815.4 993.3 V997.3 M1819.4 993.3 V997.3 M1823.4 994.8 V995.8 M1827.4 993.3 V997.3 M1831.4 994.8 V995.8 M1835.4 993.3 V997.3 M1839.4 994.7 V995.9 M1843.4 994.7 V995.9 M1847.4 994.7 V995.9 M1851.4 994.7 V995.9 M1855.4 994.7 V995.9 M1859.4 994.7 V995.9 M1863.4 994.7 V995.9 M1867.4 994.7 V995.9 M1871.4 994.7 V995.9 M1875.4 994.7 V995.9 M1879.4 992.8 V997.8 M1883.4 994.7 V995.9 M1887.4 994.7 V995.9 M1891.4 994.7 V995.9 M1895.4 994.7 V995.9 M1899.4 994.7 V995.9 M1903.4 991.8 V998.8 M1907.4 994.7 V995.9 M1911.4 994.7 V995.9 M1915.4 994.7 V995.9 M1919.4 994.7 V995.9 M1923.4 993.8 V996.8 M1927.4 994.7 V995.9 M1931.4 994.7 V995.9 M1935.4 994.7 V995.9 M1939.4 994.7 V995.9 M1943.4 994.7 V995.9 M1947.4 994.7 V995.9 M1951.4 992.8 V997.8 M1955.4 994.7 V995.9 M1959.4 994.7 V995.9 M1963.4 994.7 V995.9 M1967.4 994.7 V995.9 M1971.4 992.8 V997.8 M1975.4 994.7 V995.9 M1979.4 994.7 V995.9 M1983.4 994.7 V995.9 M1987.4 994.7 V995.9 M1991.4 994.7 V995.9 M1995.4 994.7 V995.9 M1999.4 994.7 V995.9 M2003.4 994.7 V995.9 M2007.4 994.7 V995.9 M2011.4 994.7 V995.9 M2015.4 994.7 V995.9 M2019.4 994.7 V995.9 M2023.4 994.7 V995.9 M2027.4 994.7 V995.9 M2031.4 994.7 V995.9 M2035.4 994.7 V995.9 M2039.4 994.7 V995.9 M2043.4 994.7 V995.9 M2047.4 994.7 V995.9 M2051.4 994.7 V995.9 M2055.4 994.7 V995.9 M2059.4 994.7 V995.9 M2063.4 994.7 V995.9 M2067.4 994.7 V995.9 M2071.4 994.7 V995.9 M2075.4 994.7 V995.9 M2079.4 994.7 V995.9 M2083.4 994.7 V995.9 M2087.4 994.7 V995.9 M2091.4 994.7 V995.9 M2095.4 994.7 V995.9 M2099.4 994.7 V995.9 M2103.4 994.7 V995.9" stroke="#d0769c" stroke-width="1.3" fill="none"/>
<line x1="168.3" y1="995.3" x2="2104" y2="995.3" stroke="#d0769c" stroke-width="1" stroke-opacity="0.75"/>
<path d="M171.4 1133.7 V1134.9 M175.4 1133.7 V1134.9 M179.4 1132.3 V1136.3 M187.4 1130.6 V1138 M191.4 1130.6 V1138 M195.4 1127.8 V1140.8 M199.4 1125 V1143.6 M203.4 1129.7 V1138.9 M207.4 1113 V1155.6 M211.4 1131 V1137.6 M215.4 1131 V1137.6 M219.4 1132.8 V1135.8 M223.4 1131.5 V1137.1 M227.4 1127.8 V1140.8 M231.4 1129.7 V1138.9 M235.4 1132.4 V1136.2 M239.4 1127.8 V1140.8 M243.4 1123.8 V1144.8 M247.4 1123.8 V1144.8 M251.4 1126 V1142.6 M255.4 1129.7 V1138.9 M259.4 1132.8 V1135.8 M263.4 1132.8 V1135.8 M271.4 1132.8 V1135.8 M275.4 1131 V1137.6 M279.4 1131.5 V1137.1 M283.4 1128.7 V1139.9 M287.4 1127.8 V1140.8 M291.4 1130.6 V1138 M295.4 1130.6 V1138 M299.4 1126.9 V1141.7 M303.4 1129.7 V1138.9 M307.4 1126 V1142.6 M311.4 1132.1 V1136.5 M315.4 1132.8 V1135.8 M319.4 1131.5 V1137.1 M323.4 1127.8 V1140.8 M331.4 1130.6 V1138 M335.4 1127.8 V1140.8 M339.4 1129.7 V1138.9 M343.4 1126 V1142.6 M347.4 1131 V1137.6 M351.4 1127.8 V1140.8 M355.4 1132.1 V1136.5 M359.4 1132.8 V1135.8 M363.4 1108 V1160.6 M367.4 1132.8 V1135.8 M371.4 1132.1 V1136.5 M375.4 1132.8 V1135.8 M379.4 1131.5 V1137.1 M383.4 1129.7 V1138.9 M387.4 1130.6 V1138 M403.4 1132.8 V1135.8 M411.4 1132.8 V1135.8 M415.4 1129.7 V1138.9 M419.4 1127.8 V1140.8 M427.4 1128.7 V1139.9 M431.4 1132.1 V1136.5 M435.4 1124.1 V1144.5 M439.4 1113 V1155.6 M447.4 1130.6 V1138 M451.4 1128.7 V1139.9 M459.4 1132.1 V1136.5 M467.4 1132.1 V1136.5 M471.4 1129.7 V1138.9 M479.4 1132.1 V1136.5 M483.4 1132.1 V1136.5 M487.4 1132.8 V1135.8 M491.4 1132.8 V1135.8 M495.4 1131.5 V1137.1 M499.4 1132.1 V1136.5 M503.4 1132.8 V1135.8 M507.4 1132.8 V1135.8 M511.4 1128.7 V1139.9 M515.4 1130.6 V1138 M519.4 1129.7 V1138.9 M523.4 1133.3 V1135.3 M527.4 1120.4 V1148.2 M531.4 1131.5 V1137.1 M535.4 1124.1 V1144.5 M539.4 1133.3 V1135.3 M543.4 1128.7 V1139.9 M551.4 1129.7 V1138.9 M555.4 1126.9 V1141.7 M559.4 1132.3 V1136.3 M563.4 1133.7 V1134.9 M567.4 1131 V1137.6 M575.4 1132.8 V1135.8 M579.4 1132.8 V1135.8 M583.4 1131 V1137.6 M587.4 1131.5 V1137.1 M591.4 1132.8 V1135.8 M595.4 1128.7 V1139.9 M599.4 1131.5 V1137.1 M603.4 1132.4 V1136.2 M607.4 1131 V1137.6 M611.4 1132.1 V1136.5 M615.4 1128.7 V1139.9 M619.4 1131 V1137.6 M623.4 1097.8 V1170.8 M627.4 1129.7 V1138.9 M631.4 1100.3 V1168.3 M635.4 1118.6 V1150 M639.4 1111.7 V1156.9 M643.4 1129.7 V1138.9 M647.4 1118.6 V1150 M651.4 1131 V1137.6 M663.4 1132.8 V1135.8 M667.4 1129.1 V1139.5 M671.4 1130.6 V1138 M675.4 1132.8 V1135.8 M679.4 1126.9 V1141.7 M683.4 1129.7 V1138.9 M687.4 1132.8 V1135.8 M691.4 1129.7 V1138.9 M695.4 1127.8 V1140.8 M699.4 1132.1 V1136.5 M703.4 1131.5 V1137.1 M707.4 1128.7 V1139.9 M711.4 1126.9 V1141.7 M715.4 1125 V1143.6 M719.4 1128.7 V1139.9 M723.4 1122.8 V1145.8 M727.4 1123.8 V1144.8 M731.4 1132.1 V1136.5 M739.4 1127.8 V1140.8 M743.4 1131.5 V1137.1 M747.4 1129.7 V1138.9 M751.4 1132.1 V1136.5 M759.4 1094.9 V1173.7 M763.4 1119.5 V1149.1 M767.4 1124.1 V1144.5 M771.4 1118.6 V1150 M775.4 1132.8 V1135.8 M779.4 1125 V1143.6 M783.4 1129.7 V1138.9 M787.4 1116.7 V1151.9 M791.4 1132.8 V1135.8 M795.4 1132.8 V1135.8 M799.4 1132.8 V1135.8 M803.4 1132.8 V1135.8 M807.4 1126.9 V1141.7 M811.4 1118 V1150.6 M815.4 1123.2 V1145.4 M819.4 1123.8 V1144.8 M823.4 1123.8 V1144.8 M827.4 1129.7 V1138.9 M835.4 1131.5 V1137.1 M839.4 1131.5 V1137.1 M843.4 1130.6 V1138 M847.4 1127.8 V1140.8 M851.4 1127.8 V1140.8 M859.4 1123.8 V1144.8 M863.4 1130.6 V1138 M867.4 1132.1 V1136.5 M871.4 1125 V1143.6 M875.4 1097.8 V1170.8 M879.4 1123.2 V1145.4 M883.4 1127.8 V1140.8 M887.4 1130.6 V1138 M891.4 1132.8 V1135.8 M895.4 1127.8 V1140.8 M899.4 1131 V1137.6 M903.4 1132.8 V1135.8 M915.4 1131 V1137.6 M923.4 1130.6 V1138 M927.4 1126 V1142.6 M931.4 1127.8 V1140.8 M935.4 1130.6 V1138 M939.4 1127.8 V1140.8 M943.4 1129.7 V1138.9 M947.4 1123.8 V1144.8 M951.4 1126.9 V1141.7 M955.4 1129.7 V1138.9 M959.4 1126.9 V1141.7 M963.4 1133.3 V1135.3 M967.4 1129.7 V1138.9 M971.4 1122.8 V1145.8 M975.4 1131.5 V1137.1 M979.4 1132.8 V1135.8 M983.4 1132.4 V1136.2 M987.4 1119.5 V1149.1 M995.4 1132.4 V1136.2 M999.4 1126.9 V1141.7 M1003.4 1128.7 V1139.9 M1007.4 1121.7 V1146.9 M1011.4 1114.9 V1153.7 M1015.4 1123.8 V1144.8 M1019.4 1123.8 V1144.8 M1023.4 1129.7 V1138.9 M1031.4 1126 V1142.6 M1035.4 1129.7 V1138.9 M1043.4 1131.5 V1137.1 M1047.4 1125 V1143.6 M1051.4 1123.8 V1144.8 M1055.4 1131 V1137.6 M1059.4 1132.1 V1136.5 M1063.4 1132.4 V1136.2 M1071.4 1132.8 V1135.8 M1075.4 1132.8 V1135.8 M1079.4 1132.4 V1136.2 M1083.4 1129.1 V1139.5 M1107.4 1129.7 V1138.9 M1111.4 1132.8 V1135.8 M1127.4 1132.1 V1136.5 M1131.4 1132.1 V1136.5 M1139.4 1132.1 V1136.5 M1143.4 1132.8 V1135.8 M1147.4 1132.8 V1135.8 M1151.4 1131.5 V1137.1 M1155.4 1132.8 V1135.8 M1159.4 1112.1 V1156.5 M1163.4 1116.7 V1151.9 M1167.4 1132.1 V1136.5 M1171.4 1126 V1142.6 M1175.4 1132.8 V1135.8 M1179.4 1131 V1137.6 M1183.4 1131 V1137.6 M1187.4 1132.1 V1136.5 M1191.4 1132.8 V1135.8 M1195.4 1132.8 V1135.8 M1199.4 1132.8 V1135.8 M1203.4 1133.3 V1135.3 M1211.4 1110.8 V1157.8 M1215.4 1113.9 V1154.7 M1219.4 1129.7 V1138.9 M1223.4 1118 V1150.6 M1227.4 1109.9 V1158.7 M1231.4 1123.8 V1144.8 M1235.4 1132.1 V1136.5 M1239.4 1129.1 V1139.5 M1243.4 1121 V1147.6 M1247.4 1132.4 V1136.2 M1251.4 1132.8 V1135.8 M1255.4 1131.5 V1137.1 M1259.4 1132.1 V1136.5 M1263.4 1131 V1137.6 M1267.4 1125 V1143.6 M1271.4 1126.9 V1141.7 M1275.4 1129.1 V1139.5 M1279.4 1126.9 V1141.7 M1283.4 1129.7 V1138.9 M1287.4 1104.7 V1163.9 M1291.4 1096 V1172.6 M1295.4 1131.5 V1137.1 M1299.4 1132.8 V1135.8 M1303.4 1128.7 V1139.9 M1307.4 1119.5 V1149.1 M1311.4 1131.5 V1137.1 M1315.4 1127.8 V1140.8 M1319.4 1126.9 V1141.7 M1323.4 1131 V1137.6 M1327.4 1132.8 V1135.8 M1331.4 1131 V1137.6 M1347.4 1129.7 V1138.9 M1351.4 1132.8 V1135.8 M1355.4 1132.1 V1136.5 M1359.4 1132.3 V1136.3 M1363.4 1132.1 V1136.5 M1367.4 1131.5 V1137.1 M1375.4 1128.7 V1139.9 M1383.4 1132.1 V1136.5 M1387.4 1132.1 V1136.5 M1399.4 1132.8 V1135.8 M1407.4 1132.4 V1136.2 M1411.4 1127.8 V1140.8 M1415.4 1127.8 V1140.8 M1419.4 1123.8 V1144.8 M1423.4 1131 V1137.6 M1427.4 1123.8 V1144.8 M1435.4 1132.8 V1135.8 M1439.4 1132.8 V1135.8 M1443.4 1129.7 V1138.9 M1447.4 1130.6 V1138 M1451.4 1132.1 V1136.5 M1459.4 1123.8 V1144.8 M1463.4 1131 V1137.6 M1467.4 1132.1 V1136.5 M1475.4 1130.6 V1138 M1479.4 1127.8 V1140.8 M1487.4 1132.1 V1136.5 M1491.4 1132.1 V1136.5 M1495.4 1132.8 V1135.8 M1499.4 1132.8 V1135.8 M1503.4 1131.5 V1137.1 M1507.4 1128.7 V1139.9 M1511.4 1130.6 V1138 M1515.4 1128.7 V1139.9 M1519.4 1132.8 V1135.8 M1523.4 1132.8 V1135.8 M1531.4 1132.8 V1135.8 M1539.4 1132.1 V1136.5 M1543.4 1132.8 V1135.8 M1551.4 1127.8 V1140.8 M1555.4 1128.7 V1139.9 M1559.4 1128.7 V1139.9 M1563.4 1131 V1137.6 M1571.4 1131.5 V1137.1 M1575.4 1132.8 V1135.8 M1579.4 1131 V1137.6 M1583.4 1132.8 V1135.8 M1591.4 1132.8 V1135.8 M1595.4 1129.7 V1138.9 M1599.4 1128.7 V1139.9 M1607.4 1130.6 V1138 M1611.4 1132.8 V1135.8 M1619.4 1131.5 V1137.1 M1623.4 1132.8 V1135.8 M1627.4 1132.8 V1135.8 M1631.4 1128.7 V1139.9 M1635.4 1124.7 V1143.9 M1639.4 1132.1 V1136.5 M1643.4 1132.8 V1135.8 M1647.4 1132.8 V1135.8 M1651.4 1132.8 V1135.8 M1655.4 1129.7 V1138.9 M1659.4 1127.8 V1140.8 M1667.4 1132.1 V1136.5 M1671.4 1126.9 V1141.7 M1675.4 1133.3 V1135.3 M1687.4 1132.1 V1136.5 M1691.4 1133.3 V1135.3 M1695.4 1130.6 V1138 M1699.4 1130.6 V1138 M1703.4 1132.1 V1136.5 M1719.4 1130.6 V1138 M1723.4 1132.8 V1135.8 M1727.4 1129.7 V1138.9 M1739.4 1129.7 V1138.9 M1747.4 1128.7 V1139.9 M1751.4 1128.7 V1139.9 M1755.4 1132.8 V1135.8 M1759.4 1131.3 V1137.3 M1763.4 1119.9 V1148.7 M1767.4 1133.3 V1135.3 M1771.4 1129.3 V1139.3 M1775.4 1132.3 V1136.3 M1779.4 1133.8 V1134.8 M1783.4 1131.3 V1137.3 M1787.4 1130.3 V1138.3 M1791.4 1129.3 V1139.3 M1795.4 1131.8 V1136.8 M1799.4 1133.8 V1134.8 M1803.4 1131.3 V1137.3 M1807.4 1131.3 V1137.3 M1811.4 1131.3 V1137.3 M1815.4 1132.3 V1136.3 M1819.4 1132.3 V1136.3 M1823.4 1133.8 V1134.8 M1827.4 1132.3 V1136.3 M1831.4 1133.8 V1134.8 M1835.4 1132.3 V1136.3 M1839.4 1133.7 V1134.9 M1843.4 1133.7 V1134.9 M1847.4 1133.7 V1134.9 M1851.4 1133.7 V1134.9 M1855.4 1133.7 V1134.9 M1859.4 1133.7 V1134.9 M1863.4 1133.7 V1134.9 M1867.4 1133.7 V1134.9 M1871.4 1133.7 V1134.9 M1875.4 1133.7 V1134.9 M1879.4 1131.8 V1136.8 M1883.4 1133.7 V1134.9 M1887.4 1133.7 V1134.9 M1891.4 1133.7 V1134.9 M1895.4 1133.7 V1134.9 M1899.4 1133.7 V1134.9 M1903.4 1130.8 V1137.8 M1907.4 1133.7 V1134.9 M1911.4 1133.7 V1134.9 M1915.4 1133.7 V1134.9 M1919.4 1133.7 V1134.9 M1923.4 1132.8 V1135.8 M1927.4 1133.7 V1134.9 M1931.4 1133.7 V1134.9 M1935.4 1133.7 V1134.9 M1939.4 1133.7 V1134.9 M1943.4 1133.7 V1134.9 M1947.4 1133.7 V1134.9 M1951.4 1131.8 V1136.8 M1955.4 1133.7 V1134.9 M1959.4 1133.7 V1134.9 M1963.4 1133.7 V1134.9 M1967.4 1133.7 V1134.9 M1971.4 1131.8 V1136.8 M1975.4 1133.7 V1134.9 M1979.4 1133.7 V1134.9 M1983.4 1133.7 V1134.9 M1987.4 1133.7 V1134.9 M1991.4 1133.7 V1134.9 M1995.4 1133.7 V1134.9 M1999.4 1133.7 V1134.9 M2003.4 1133.7 V1134.9 M2007.4 1133.7 V1134.9 M2011.4 1133.7 V1134.9 M2015.4 1133.7 V1134.9 M2019.4 1133.7 V1134.9 M2023.4 1133.7 V1134.9 M2027.4 1133.7 V1134.9 M2031.4 1133.7 V1134.9 M2035.4 1133.7 V1134.9 M2039.4 1133.7 V1134.9 M2043.4 1133.7 V1134.9 M2047.4 1133.7 V1134.9 M2051.4 1133.7 V1134.9 M2055.4 1133.7 V1134.9 M2059.4 1133.7 V1134.9 M2063.4 1133.7 V1134.9 M2067.4 1133.7 V1134.9 M2071.4 1133.7 V1134.9 M2075.4 1133.7 V1134.9 M2079.4 1133.7 V1134.9 M2083.4 1133.7 V1134.9 M2087.4 1133.7 V1134.9 M2091.4 1133.7 V1134.9 M2095.4 1133.7 V1134.9 M2099.4 1133.7 V1134.9 M2103.4 1133.7 V1134.9" stroke="#d0769c" stroke-width="1.3" fill="none"/>
<line x1="168.3" y1="1134.3" x2="2104" y2="1134.3" stroke="#d0769c" stroke-width="1" stroke-opacity="0.75"/>
<line x1="755.4" y1="926" x2="755.4" y2="1204" stroke="#d0769c" stroke-width="1.3"/>
<line x1="1269.4" y1="926" x2="1269.4" y2="1203.5" stroke="#ffffff" stroke-width="1.5"/>
<line x1="1474.4" y1="926" x2="1474.4" y2="1203.5" stroke="#ffffff" stroke-width="1.5"/>
<circle cx="1304" cy="1064.3" r="3.8" fill="#c8c8cc" stroke="none" stroke-width="2"/>
<circle cx="1362" cy="1064.3" r="3.8" fill="#c8c8cc" stroke="none" stroke-width="2"/>
<circle cx="1420" cy="1064.3" r="3.8" fill="#c8c8cc" stroke="none" stroke-width="2"/>
<circle cx="1478.3" cy="1064.3" r="3.8" fill="#c8c8cc" stroke="none" stroke-width="2"/>
<circle cx="1536.7" cy="1064.3" r="3.8" fill="#c8c8cc" stroke="none" stroke-width="2"/>
<circle cx="1594.7" cy="1064.3" r="3.8" fill="#c8c8cc" stroke="none" stroke-width="2"/>
<text x="1844.07" y="951.83" font-size="24.65" fill="#cdc8d8" text-anchor="start" font-weight="normal" textLength="246.96" lengthAdjust="spacingAndGlyphs" stroke="#cdc8d8" stroke-width="0.74">READ-ONLY &#160;| &#160;00:03 &#160;| &#160;979 KB</text>
<text x="166.5" y="1294" font-size="27.62" fill="#ffffff" text-anchor="start" font-weight="normal" textLength="50" lengthAdjust="spacingAndGlyphs">PITCH</text>
<text x="308.5" y="1294" font-size="27.62" fill="#ffffff" text-anchor="start" font-weight="normal" textLength="39" lengthAdjust="spacingAndGlyphs">MOD</text>
<line x1="408" y1="1283" x2="1113" y2="1283" stroke="#8b8b92" stroke-width="2"/>
<line x1="1135" y1="1283" x2="1428" y2="1283" stroke="#7a88aa" stroke-width="2"/>
<line x1="1450" y1="1283" x2="2000" y2="1283" stroke="#8b8b92" stroke-width="2"/>
<circle cx="1124" cy="1283.5" r="10.8" fill="#121522" stroke="#8a94ae" stroke-width="2.2"/>
<circle cx="1439" cy="1283.5" r="10.8" fill="#121522" stroke="#8a94ae" stroke-width="2.2"/>
<rect x="137.1" y="1333.1" width="110" height="261.5" rx="0" fill="none" stroke="#ffffff" stroke-width="2.2"/>
<line x1="140" y1="1465" x2="244" y2="1465" stroke="#8a94ae" stroke-width="2"/>
<rect x="273.1" y="1333.1" width="110" height="261.5" rx="0" fill="none" stroke="#ffffff" stroke-width="2.2"/>
<line x1="276" y1="1518.5" x2="380" y2="1518.5" stroke="#8a94ae" stroke-width="2"/>
<clipPath id="kb"><rect x="408" y="1300" width="1592" height="320"/></clipPath>
<g clip-path="url(#kb)">
<path d="M335.6 1332 H457.6 V1591 Q457.6 1595 453.6 1595 H339.6 Q335.6 1595 335.6 1591 Z" fill="#fff"/>
<path d="M482 1332 H604 V1591 Q604 1595 600 1595 H486 Q482 1595 482 1591 Z" fill="#fff"/>
<rect x="629.4" y="1333" width="120" height="261" rx="4" fill="#8a94ac" stroke="#f0f0f4" stroke-width="2"/>
<path d="M774.8 1332 H896.8 V1591 Q896.8 1595 892.8 1595 H778.8 Q774.8 1595 774.8 1591 Z" fill="#fff"/>
<path d="M921.2 1332 H1043.2 V1591 Q1043.2 1595 1039.2 1595 H925.2 Q921.2 1595 921.2 1591 Z" fill="#fff"/>
<path d="M1067.6 1332 H1189.6 V1591 Q1189.6 1595 1185.6 1595 H1071.6 Q1067.6 1595 1067.6 1591 Z" fill="#fff"/>
<path d="M1214 1332 H1336 V1591 Q1336 1595 1332 1595 H1218 Q1214 1595 1214 1591 Z" fill="#fff"/>
<path d="M1360.4 1332 H1482.4 V1591 Q1482.4 1595 1478.4 1595 H1364.4 Q1360.4 1595 1360.4 1591 Z" fill="#fff"/>
<path d="M1506.8 1332 H1628.8 V1591 Q1628.8 1595 1624.8 1595 H1510.8 Q1506.8 1595 1506.8 1591 Z" fill="#fff"/>
<path d="M1653.2 1332 H1775.2 V1591 Q1775.2 1595 1771.2 1595 H1657.2 Q1653.2 1595 1653.2 1591 Z" fill="#fff"/>
<path d="M1799.6 1332 H1921.6 V1591 Q1921.6 1595 1917.6 1595 H1803.6 Q1799.6 1595 1799.6 1591 Z" fill="#fff"/>
<path d="M1946 1332 H2068 V1591 Q2068 1595 2064 1595 H1950 Q1946 1595 1946 1591 Z" fill="#fff"/>
<rect x="421" y="1331" width="98" height="165.5" fill="#121522"/>
<rect x="434" y="1333.5" width="72" height="150" rx="4" fill="#121522" stroke="#e8e8ec" stroke-width="2"/>
<rect x="713.5" y="1331" width="98" height="165.5" fill="#121522"/>
<rect x="726.5" y="1333.5" width="72" height="150" rx="4" fill="#121522" stroke="#e8e8ec" stroke-width="2"/>
<rect x="860" y="1331" width="98" height="165.5" fill="#121522"/>
<rect x="873" y="1333.5" width="72" height="150" rx="4" fill="#121522" stroke="#e8e8ec" stroke-width="2"/>
<rect x="1006.5" y="1331" width="98" height="165.5" fill="#121522"/>
<rect x="1019.5" y="1333.5" width="72" height="150" rx="4" fill="#121522" stroke="#e8e8ec" stroke-width="2"/>
<rect x="1299.5" y="1331" width="98" height="165.5" fill="#121522"/>
<rect x="1312.5" y="1333.5" width="72" height="150" rx="4" fill="#121522" stroke="#e8e8ec" stroke-width="2"/>
<rect x="1446" y="1331" width="98" height="165.5" fill="#121522"/>
<rect x="1459" y="1333.5" width="72" height="150" rx="4" fill="#121522" stroke="#e8e8ec" stroke-width="2"/>
<rect x="1739" y="1331" width="98" height="165.5" fill="#121522"/>
<rect x="1752" y="1333.5" width="72" height="150" rx="4" fill="#121522" stroke="#e8e8ec" stroke-width="2"/>
<rect x="1885.5" y="1331" width="98" height="165.5" fill="#121522"/>
<rect x="1898.5" y="1333.5" width="72" height="150" rx="4" fill="#121522" stroke="#e8e8ec" stroke-width="2"/>
</g>
<text x="1252.5" y="1370" font-size="27.62" fill="#1a1d2a" text-anchor="start" font-weight="normal" textLength="22.5" lengthAdjust="spacingAndGlyphs">C4</text>
<text x="2053" y="1401.5" font-size="29.8" fill="#ffffff" text-anchor="start" font-weight="normal" textLength="53" lengthAdjust="spacingAndGlyphs">PANIC</text>
<text x="2056" y="1545.5" font-size="29.8" fill="#8890b0" text-anchor="start" font-weight="normal" textLength="47" lengthAdjust="spacingAndGlyphs">HOLD</text>
<rect x="38.8" y="1553.6" width="7.3" height="19.6" rx="0.5" fill="#fff"/>
<rect x="47.9" y="1550.7" width="16.2" height="25.3" rx="0.5" fill="#fff"/>
<rect x="65.8" y="1553.6" width="7.4" height="19.6" rx="0.5" fill="#fff"/>
</svg></body></html>
